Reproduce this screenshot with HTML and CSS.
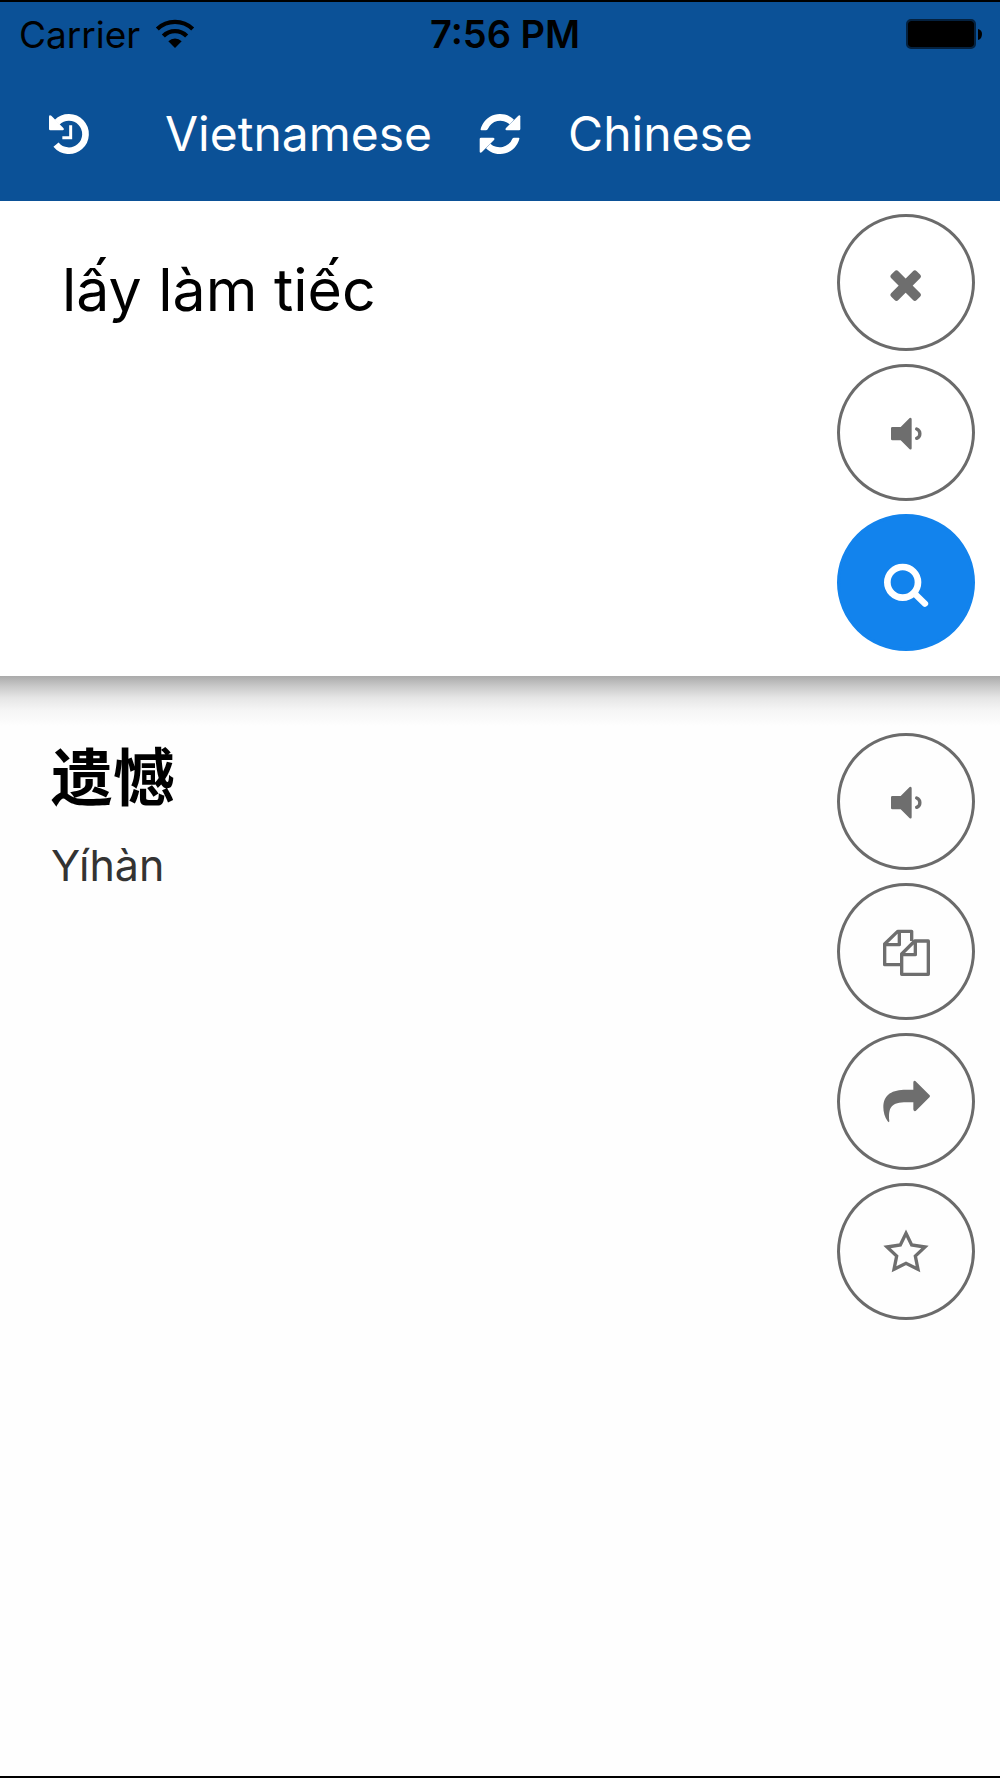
FILE: index.html
```html
<!DOCTYPE html>
<html lang="en">
<head>
  <meta charset="UTF-8" />
  <meta name="viewport" content="width=device-width, initial-scale=1.0"/>
  <title>Vietnamese Chinese Dictionary</title>
  <link rel="stylesheet" href="styles.css">
</head>
<body>

  <header>
    <div class="status-bar">
      <div class="carrier">
        <span>Carrier</span>
        <svg class="wifi" viewBox="0 0 120 96">
          <path d="M7 33 A77 77 0 0 1 113 33" fill="none" stroke="#000" stroke-width="13"/>
          <path d="M25 54 A49 49 0 0 1 95 54" fill="none" stroke="#000" stroke-width="13"/>
          <path d="M60 90 L40 70 A28 28 0 0 1 80 70 Z"/>
        </svg>
      </div>
      <div class="time">7:56 PM</div>
      <div class="power">
        <svg class="battery" viewBox="0 0 77 31">
          <rect x="1" y="1" width="68" height="28" rx="4" fill="none" stroke="#04213f" stroke-width="2"/>
          <rect x="2" y="2" width="66" height="26" rx="3"/>
          <path d="M72 10 Q76 11 76 15 Q76 20 72 21 Z"/>
        </svg>
      </div>
    </div>

    <nav class="languages">
      <button class="tool" aria-label="History">
        <svg viewBox="0 0 132 132">
          <path d="M27 98 A50 50 0 1 0 30 31" fill="none" stroke="currentColor" stroke-width="20"/>
          <path d="M6 13 V51 Q6 55 10 55 H47 Q53 53 49 48 L13 11 Q7 8 6 13 Z" fill="currentColor"/>
          <path d="M71 40 V77 H46" fill="none" stroke="currentColor" stroke-width="9"/>
        </svg>
      </button>
      <button class="language">Vietnamese</button>
      <button class="tool" aria-label="Swap languages">
        <svg viewBox="0 0 132 132">
          <g id="swap-half">
            <path d="M8 51 A60 60 0 0 1 108 23 L95 37 A41 41 0 0 0 29 52 Q27 55 24 55 H10 Q7 55 8 51 Z" fill="currentColor"/>
            <path d="M127 13 V51 Q127 55 123 55 H86 Q80 53 84 48 L121 11 Q126 8 127 13 Z" fill="currentColor"/>
          </g>
          <use href="#swap-half" transform="rotate(180 66 66)"/>
        </svg>
      </button>
      <button class="language">Chinese</button>
    </nav>
  </header>

  <section class="search">
    <textarea aria-label="Text to translate" spellcheck="false">lấy làm tiếc</textarea>
    <div class="actions">
      <button class="circle" aria-label="Clear">
        <svg viewBox="0 0 180 180" fill="currentColor">
          <rect x="35" y="83" width="108" height="30" rx="8" transform="rotate(45 89 98)"/>
          <rect x="35" y="83" width="108" height="30" rx="8" transform="rotate(-45 89 98)"/>
        </svg>
      </button>
      <button class="circle" aria-label="Listen">
        <svg viewBox="0 0 180 180">
          <path d="M49 72 H74 L101 45 Q107 43 107 49 V136 Q107 141 101 139 L74 112 H49 Q45 112 45 108 V76 Q45 72 49 72 Z" fill="currentColor"/>
          <path d="M122 78 A15 15 0 0 1 122 106" fill="none" stroke="currentColor" stroke-width="10" stroke-linecap="round"/>
        </svg>
      </button>
      <button class="circle primary" aria-label="Search">
        <svg viewBox="0 0 180 180" fill="none" stroke="currentColor">
          <circle cx="80" cy="88" r="46" stroke-width="20"/>
          <path d="M114 120 L147 152" stroke-width="19" stroke-linecap="round"/>
        </svg>
      </button>
    </div>
  </section>

  <main class="result">
    <div class="meaning">
      <h1 lang="zh">遗憾</h1>
      <p>Yíhàn</p>
    </div>
    <div class="actions">
      <button class="circle" aria-label="Listen to result">
        <svg viewBox="0 0 180 180">
          <path d="M49 72 H74 L101 45 Q107 43 107 49 V136 Q107 141 101 139 L74 112 H49 Q45 112 45 108 V76 Q45 72 49 72 Z" fill="currentColor"/>
          <path d="M122 78 A15 15 0 0 1 122 106" fill="none" stroke="currentColor" stroke-width="10" stroke-linecap="round"/>
        </svg>
      </button>
      <button class="circle" aria-label="Copy">
        <svg viewBox="0 0 180 180" fill="none" stroke="currentColor" stroke-width="10" stroke-linejoin="round">
          <path d="M74 128 H26 V66 L65 28 H107 V57 M70 28 V68 H27"/>
          <path d="M77 157 V96 L116 57 H157 V157 Z M118 58 V98 H78"/>
        </svg>
      </button>
      <button class="circle" aria-label="Share">
        <svg viewBox="0 0 180 180" fill="currentColor">
          <path d="M112 31 Q112 25 118 27 L161 70 Q163 72 161 75 L119 117 Q112 119 112 112 V91 H92 C46 91 36 106 40 148 Q39 153 35 148 C26 136 22 120 22 106 C22 66 50 53 90 53 H112 Z"/>
        </svg>
      </button>
      <button class="circle" aria-label="Add to favourites">
        <svg viewBox="0 0 180 180" fill="none" stroke="currentColor" stroke-width="10">
          <path d="M90 34 L107 69 L147 75 L118 102 L126 142 L90 124 L54 142 L62 102 L33 75 L73 69 Z"/>
        </svg>
      </button>
    </div>
  </main>

</body>
</html>
```
FILE: styles.css
```css
* {
  box-sizing: border-box;
}

body {
  display: flex;
  flex-direction: column;
  min-height: 100vh;
  margin: 0;
  border-top: 2px solid #000;
  border-bottom: 2px solid #000;
  font-family: Inter, "Noto Sans CJK SC", sans-serif;
  background: #fefefe;
  color: #000;
}

button {
  padding: 0;
  border: none;
  background: none;
  font-family: inherit;
  color: inherit;
  cursor: pointer;
}

svg {
  display: block;
}

header {
  background: #0b5197;
}

.status-bar {
  display: grid;
  grid-template-columns: 50fr auto 49fr;
  align-items: center;
  height: 64px;
  padding: 0 17px 0 19px;
  font-size: 37px;
}

.carrier {
  display: flex;
  align-items: center;
  gap: 15px;
}

.wifi {
  width: 40px;
  height: 32px;
}

.time {
  font-size: 38px;
  font-weight: 600;
}

.power {
  display: flex;
  justify-content: flex-end;
}

.battery {
  width: 77px;
  height: 31px;
}

.languages {
  display: flex;
  align-items: center;
  gap: 46px;
  height: 135px;
  padding: 0 47px;
  color: #fff;
}

.tool svg {
  width: 44px;
  height: 44px;
}

.language {
  font-size: 48px;
}

.tool:first-child {
  margin-right: 28px;
}

.search {
  display: flex;
  padding: 13px 25px 25px 62px;
  background: #fff;
}

textarea {
  flex: 1;
  min-width: 0;
  padding: 40px 0 0;
  border: none;
  outline: none;
  resize: none;
  background: none;
  font-family: inherit;
  font-size: 59px;
  line-height: 72px;
  color: #000;
}

.actions {
  display: flex;
  flex-direction: column;
  gap: 13px;
}

.circle {
  display: flex;
  align-items: center;
  justify-content: center;
  width: 138px;
  height: 137px;
  border: 3px solid #6b6b6b;
  border-radius: 50%;
  color: #6e6e6e;
}

.circle svg {
  width: 60px;
  height: 60px;
}

.circle.primary {
  border-color: #1283ed;
  background: #1283ed;
  color: #fff;
}

/* the search panel casts its shadow on the result */
.result {
  flex: 1;
  display: flex;
  justify-content: space-between;
  padding: 57px 25px 57px 51px;
  background: linear-gradient(#aaa 0, #c8c8c8 10px, #e6e6e6 22px, #f5f5f5 34px, #fefefe 50px);
}

h1 {
  margin: 0;
  font-size: 62px;
  font-weight: 700;
  line-height: 92px;
}

p {
  margin: 12px 0 0;
  font-size: 43px;
  line-height: 56px;
  color: #333;
}
```
